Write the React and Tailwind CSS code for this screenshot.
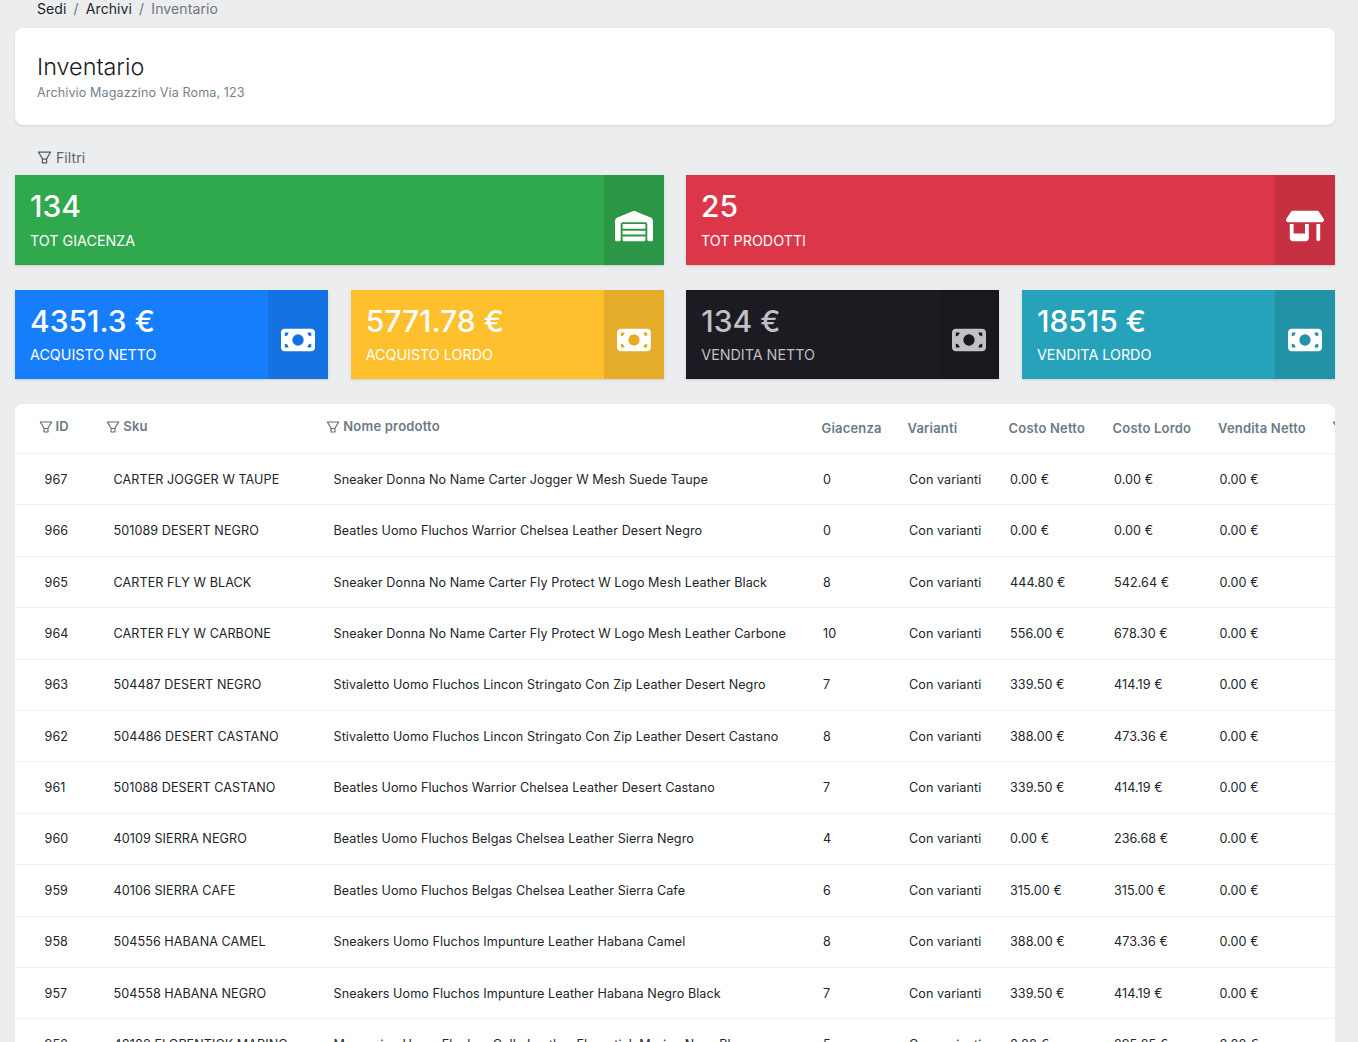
import React from 'react';
import { AiOutlineFilter } from 'react-icons/ai';
import { FaWarehouse, FaShop, FaMoneyBill } from 'react-icons/fa6';

const TOP_CARDS = [
  { value: '134', label: 'TOT GIACENZA', icon: FaWarehouse, bg: 'bg-[#30a84d]', text: 'text-white' },
  { value: '25', label: 'TOT PRODOTTI', icon: FaShop, bg: 'bg-[#dc3749]', text: 'text-white' },
];

const MONEY_CARDS = [
  { value: '4351.3 €', label: 'ACQUISTO NETTO', bg: 'bg-[#177efb]', text: 'text-white' },
  { value: '5771.78 €', label: 'ACQUISTO LORDO', bg: 'bg-[#ffc02e]', text: 'text-white' },
  { value: '134 €', label: 'VENDITA NETTO', bg: 'bg-[#1b1b21]', text: 'text-[#c0c0c6]' },
  { value: '18515 €', label: 'VENDITA LORDO', bg: 'bg-[#26a3ba]', text: 'text-white' },
];

const ROWS = [
  ['967', 'CARTER JOGGER W TAUPE', 'Sneaker Donna No Name Carter Jogger W Mesh Suede Taupe', '0', '0.00 €', '0.00 €'],
  ['966', '501089 DESERT NEGRO', 'Beatles Uomo Fluchos Warrior Chelsea Leather Desert Negro', '0', '0.00 €', '0.00 €'],
  ['965', 'CARTER FLY W BLACK', 'Sneaker Donna No Name Carter Fly Protect W Logo Mesh Leather Black', '8', '444.80 €', '542.64 €'],
  ['964', 'CARTER FLY W CARBONE', 'Sneaker Donna No Name Carter Fly Protect W Logo Mesh Leather Carbone', '10', '556.00 €', '678.30 €'],
  ['963', '504487 DESERT NEGRO', 'Stivaletto Uomo Fluchos Lincon Stringato Con Zip Leather Desert Negro', '7', '339.50 €', '414.19 €'],
  ['962', '504486 DESERT CASTANO', 'Stivaletto Uomo Fluchos Lincon Stringato Con Zip Leather Desert Castano', '8', '388.00 €', '473.36 €'],
  ['961', '501088 DESERT CASTANO', 'Beatles Uomo Fluchos Warrior Chelsea Leather Desert Castano', '7', '339.50 €', '414.19 €'],
  ['960', '40109 SIERRA NEGRO', 'Beatles Uomo Fluchos Belgas Chelsea Leather Sierra Negro', '4', '0.00 €', '236.68 €'],
  ['959', '40106 SIERRA CAFE', 'Beatles Uomo Fluchos Belgas Chelsea Leather Sierra Cafe', '6', '315.00 €', '315.00 €'],
  ['958', '504556 HABANA CAMEL', 'Sneakers Uomo Fluchos Impunture Leather Habana Camel', '8', '388.00 €', '473.36 €'],
  ['957', '504558 HABANA NEGRO', 'Sneakers Uomo Fluchos Impunture Leather Habana Negro Black', '7', '339.50 €', '414.19 €'],
  ['956', '40108 FLORENTICK MARINO', 'Mocassino Uomo Fluchos Collo Leather Florentick Marino Navy Blue', '5', '0.00 €', '295.25 €'],
];

function StatCard({ card, Icon, iconSize, height, labelGap }) {
  return (
    <div className={`flex shadow-sm ${height} ${card.bg} ${card.text}`}>
      <div className="flex-1 pl-[15px] pt-[13px]">
        <div className="text-[30px] leading-[36px] font-medium">{card.value}</div>
        <div className={`text-[14.3px] leading-[21px] ${labelGap}`}>{card.label}</div>
      </div>
      <div className="w-[60px] flex items-center justify-center bg-black/10 pt-[11px]">
        <Icon className={iconSize} />
      </div>
    </div>
  );
}

function HeadCell({ label, filter, className }) {
  return (
    <th className={`text-left font-semibold text-[13px] tracking-[0.2px] text-[#6c7a86] align-middle ${className}`}>
      <span className="flex items-center gap-[2px]">
        {filter && <AiOutlineFilter className="w-[16px] h-[16px] text-[#5f6b75]" />}
        {label}
      </span>
    </th>
  );
}

export default function App() {
  return (
    <div className="h-[1042px] overflow-hidden bg-[#ecedef] pl-[15px] pr-[23px] font-['Inter',sans-serif] text-[#212529]">
      <div className="h-[28px] pl-[22px] text-[14px] tracking-[0.1px] leading-[17px]">
        Sedi <span className="mx-[3px] text-[#6c757d]">/</span> Archivi <span className="mx-[3px] text-[#6c757d]">/</span> <span className="text-[#6c757d]">Inventario</span>
      </div>

      <div className="h-[97px] rounded-lg bg-white shadow-sm pl-[22px] pt-[24px]">
        <h1 className="text-[23.4px] leading-[29px] font-light text-[#1b1b21]">Inventario</h1>
        <p className="mt-[4px] text-[12.6px] tracking-[0.1px] leading-[15px] text-[#76818c]">Archivio Magazzino Via Roma, 123</p>
      </div>

      <div className="h-[50px] pl-[21px] pt-[24px] flex items-start gap-[3px] text-[14px] tracking-[0.1px] leading-[18px] text-[#5a636b]">
        <AiOutlineFilter className="w-[17px] h-[17px] text-[#4f5962]" />
        Filtri
      </div>

      <div className="grid grid-cols-2 gap-[22px] mb-[25px]">
        {TOP_CARDS.map(card => (
          <StatCard key={card.label} card={card} Icon={card.icon} iconSize="w-[38px] h-[38px]" height="h-[90px]" labelGap="mt-[6px]" />
        ))}
      </div>

      <div className="grid grid-cols-4 gap-[22.67px] mb-[25px]">
        {MONEY_CARDS.map(card => (
          <StatCard key={card.label} card={card} Icon={FaMoneyBill} iconSize="w-[34px] h-[34px]" height="h-[89px]" labelGap="mt-[5px]" />
        ))}
      </div>

      <div className="rounded-t-lg bg-white overflow-hidden">
        <table className="w-[1480px] table-fixed border-collapse text-[12.6px] tracking-[0.07px]">
          <colgroup>
            <col className="w-[90.3px]" />
            <col className="w-[220px]" />
            <col className="w-[496.2px]" />
            <col className="w-[86px]" />
            <col className="w-[101px]" />
            <col className="w-[104px]" />
            <col className="w-[105.5px]" />
            <col className="w-[113.5px]" />
            <col className="w-[163.5px]" />
          </colgroup>
          <thead>
            <tr className="h-[49.5px] border-b border-[#eff0f2]">
              <HeadCell label="ID" filter className="pl-[22.5px] pb-[4px]" />
              <HeadCell label="Sku" filter className="pb-[4px]" />
              <HeadCell label="Nome prodotto" filter className="pb-[4px]" />
              <HeadCell label="Giacenza" />
              <HeadCell label="Varianti" />
              <HeadCell label="Costo Netto" />
              <HeadCell label="Costo Lordo" />
              <HeadCell label="Vendita Netto" />
              <HeadCell label="" filter className="pb-[4px]" />
            </tr>
          </thead>
          <tbody>
            {ROWS.map(row => (
              <tr key={row[0]} className="h-[51.4px] border-b border-[#eff0f2]">
                <td className="pl-[29.5px] pt-[2px]">{row[0]}</td>
                <td className="pl-[8.2px] pt-[2px] whitespace-nowrap">{row[1]}</td>
                <td className="pl-[8.2px] pt-[2px] whitespace-nowrap">{row[2]}</td>
                <td className="pl-[1.5px] pt-[2px]">{row[3]}</td>
                <td className="pl-[1.5px] pt-[2px] whitespace-nowrap">Con varianti</td>
                <td className="pl-[1.5px] pt-[2px]">{row[4]}</td>
                <td className="pl-[1.5px] pt-[2px]">{row[5]}</td>
                <td className="pl-[1.5px] pt-[2px]">0.00 €</td>
                <td />
              </tr>
            ))}
          </tbody>
        </table>
      </div>
    </div>
  );
}
